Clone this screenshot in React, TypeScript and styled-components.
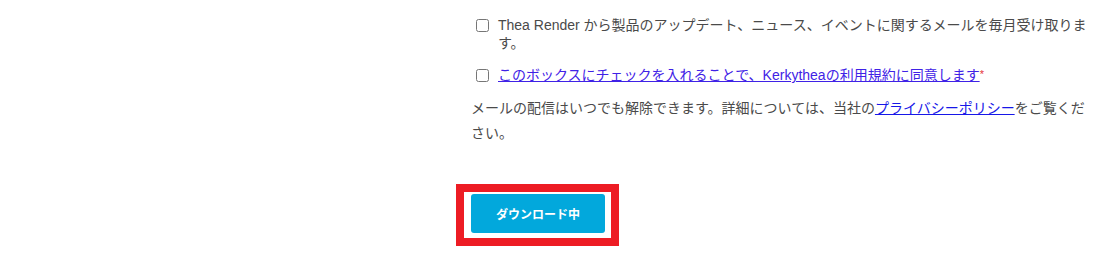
import React from "react";
import styled, { createGlobalStyle } from "styled-components";

const GlobalStyle = createGlobalStyle`
  html, body { margin: 0; padding: 0; background: #ffffff; }
  body {
    font-family: "Liberation Sans", "Noto Sans CJK JP", sans-serif;
    color: #4a4a4a;
  }
`;

const Page = styled.div`
  display: grid;
  grid-template-columns: 471px 620px;
  padding-top: 16px;
`;

const Column = styled.div`
  grid-column: 2;
  display: flex;
  flex-direction: column;
`;

const CheckRow = styled.label<{ $gap?: number }>`
  display: flex;
  align-items: flex-start;
  gap: 9px;
  padding-left: 5px;
  margin-bottom: ${(p) => p.$gap ?? 0}px;
  font-size: 14px;
  line-height: 18px;
  color: #4a4a4a;
`;

const Box = styled.input.attrs({ type: "checkbox" })`
  width: 13px;
  height: 13px;
  margin: 3px 0 0 0;
  flex: none;
`;

const LabelText = styled.span`
  flex: 1;
`;

const Link = styled.a<{ $tone?: string }>`
  color: ${(p) => p.$tone ?? "#1a1ae6"};
  text-decoration: underline;
  cursor: pointer;
`;

const Required = styled.span`
  color: #e5343a;
  font-size: 11px;
  vertical-align: top;
  position: relative;
  top: -1px;
`;

const Note = styled.p`
  margin: 12px 0 0 0;
  font-size: 14px;
  line-height: 25px;
  color: #4a4a4a;
`;

const ButtonFrame = styled.div`
  align-self: flex-start;
  margin: 38px 0 0 -15px;
  border: 8px solid #ed1c24;
  padding: 2px 6px 5px 7px;
  background: #ffffff;
`;

const DownloadButton = styled.button`
  display: block;
  width: 134px;
  height: 39px;
  border: none;
  border-radius: 3px;
  background: #02a8dc;
  color: #ffffff;
  font-family: "Liberation Sans", "Noto Sans CJK JP", sans-serif;
  font-weight: 700;
  font-size: 12px;
  padding: 0;
  cursor: pointer;
`;

export default function App() {
  return (
    <>
      <GlobalStyle />
      <Page>
        <Column>
          <CheckRow $gap={14}>
            <Box />
            <LabelText>
              Thea Render から製品のアップデート、ニュース、イベントに関するメールを毎月受け取ります。
            </LabelText>
          </CheckRow>
          <CheckRow>
            <Box />
            <LabelText>
              <Link $tone="#3f22e6">
                このボックスにチェックを入れることで、Kerkytheaの利用規約に同意します
              </Link>
              <Required>*</Required>
            </LabelText>
          </CheckRow>
          <Note>
            メールの配信はいつでも解除できます。詳細については、当社の
            <Link $tone="#1717e8">プライバシーポリシー</Link>
            をご覧ください。
          </Note>
          <ButtonFrame>
            <DownloadButton>ダウンロード中</DownloadButton>
          </ButtonFrame>
        </Column>
      </Page>
    </>
  );
}
